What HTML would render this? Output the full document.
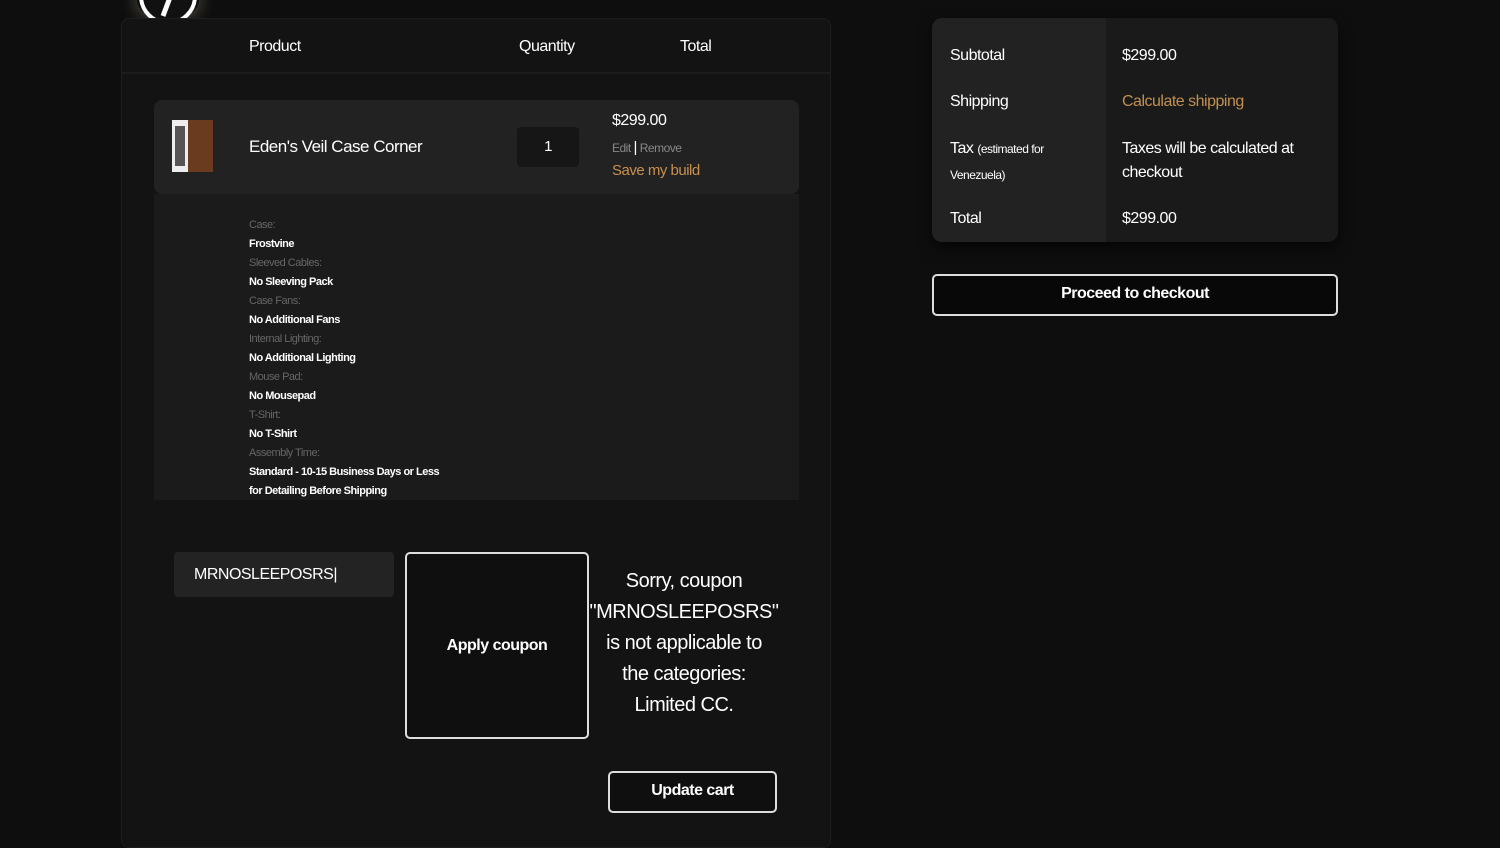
<!DOCTYPE html>
<html><head><style>
*{margin:0;padding:0;box-sizing:border-box}
body{width:1500px;height:838px;background:#0e0e0e;font-family:"Liberation Sans",sans-serif;color:#fff;position:relative;overflow:hidden;letter-spacing:-0.5px}
.a{position:absolute}
.card{left:121px;top:18px;width:710px;height:830px;background:#131313;border:1px solid #1e1e1e;border-radius:8px}
.h{font-size:16px;top:38px}
.lbl{color:#666;font-size:11px}
.val{font-size:11px;font-weight:bold}
</style></head><body>
<div class="a" style="left:137px;top:-20px;width:62px;height:40px;border-radius:50%;box-shadow:0 0 18px rgba(255,240,200,.35)"></div>
<svg class="a" style="left:137px;top:-22px" width="62" height="42"><circle cx="31" cy="18" r="27" fill="#111" stroke="#fff" stroke-width="4"/><path d="M38 6 L26 38" stroke="#fff" stroke-width="5"/></svg>
<div class="a card"></div>
<div class="a" style="left:122px;top:72px;width:708px;height:2px;background:#1c1c1c"></div>
<div class="a h" style="left:249px">Product</div>
<div class="a h" style="left:519px">Quantity</div>
<div class="a h" style="left:680px">Total</div>
<div class="a" style="left:154px;top:100px;width:645px;height:94px;background:#222;border-radius:8px"></div>
<div class="a" style="left:154px;top:194px;width:645px;height:306px;background:#1b1b1b"></div>
<div class="a" style="left:172px;top:120px;width:16px;height:52px;background:#eee"></div>
<div class="a" style="left:175px;top:126px;width:10px;height:40px;background:#555"></div>
<div class="a" style="left:188px;top:120px;width:25px;height:52px;background:#6b3b20"></div>
<div class="a" style="left:249px;top:137px;font-size:17px">Eden's Veil Case Corner</div>
<div class="a" style="left:517px;top:127px;width:62px;height:40px;background:#161616;border-radius:4px;text-align:center;line-height:40px;font-size:15px">1</div>
<div class="a" style="left:612px;top:112px;font-size:16px">$299.00</div>
<div class="a" style="left:612px;top:139px;font-size:12px;color:#888">Edit <span style="color:#fff;font-size:15px">|</span> Remove</div>
<div class="a" style="left:612px;top:162px;font-size:15px;color:#c89050">Save my build</div>
<div class="a" style="left:249px;top:216px;line-height:19px">
<div class="lbl">Case:</div><div class="val">Frostvine</div>
<div class="lbl">Sleeved Cables:</div><div class="val">No Sleeving Pack</div>
<div class="lbl">Case Fans:</div><div class="val">No Additional Fans</div>
<div class="lbl">Internal Lighting:</div><div class="val">No Additional Lighting</div>
<div class="lbl">Mouse Pad:</div><div class="val">No Mousepad</div>
<div class="lbl">T-Shirt:</div><div class="val">No T-Shirt</div>
<div class="lbl">Assembly Time:</div><div class="val">Standard - 10-15 Business Days or Less<br>for Detailing Before Shipping</div>
</div>
<div class="a" style="left:174px;top:552px;width:220px;height:45px;background:#232323;border-radius:4px;padding:14px 20px;font-size:16px">MRNOSLEEPOSRS|</div>
<div class="a" style="left:405px;top:552px;width:184px;height:187px;border:2px solid #ddd;border-radius:5px;background:#0f0f0f;text-align:center;line-height:183px;font-size:16px;font-weight:bold">Apply coupon</div>
<div class="a" style="left:580px;top:566px;width:208px;text-align:center;font-size:20px;line-height:31px">Sorry, coupon<br>"MRNOSLEEPOSRS"<br>is not applicable to<br>the categories:<br>Limited CC.</div>
<div class="a" style="left:608px;top:771px;width:169px;height:42px;border:2px solid #ddd;border-radius:5px;background:#0f0f0f;text-align:center;line-height:36px;font-size:16px;font-weight:bold">Update cart</div>
<div class="a" style="left:932px;top:18px;width:406px;height:224px;background:#1a1a1a;border-radius:10px;overflow:hidden;box-shadow:0 6px 14px rgba(0,0,0,.6)"><div style="width:174px;height:100%;background:#222"></div></div>
<div class="a" style="left:950px;top:47px;font-size:16px">Subtotal</div>
<div class="a" style="left:1122px;top:47px;font-size:16px">$299.00</div>
<div class="a" style="left:950px;top:93px;font-size:16px">Shipping</div>
<div class="a" style="left:1122px;top:93px;font-size:16px;color:#c09050">Calculate shipping</div>
<div class="a" style="left:950px;top:136px;font-size:16px;line-height:25px">Tax <span style="font-size:12px">(estimated for</span><br><span style="font-size:12px">Venezuela)</span></div>
<div class="a" style="left:1122px;top:137px;font-size:16px;line-height:24px">Taxes will be calculated at<br>checkout</div>
<div class="a" style="left:950px;top:210px;font-size:16px">Total</div>
<div class="a" style="left:1122px;top:210px;font-size:16px">$299.00</div>
<div class="a" style="left:932px;top:274px;width:406px;height:42px;border:2px solid #ddd;border-radius:5px;background:#080808;text-align:center;line-height:36px;font-size:16px;font-weight:bold">Proceed to checkout</div>
</body></html>
